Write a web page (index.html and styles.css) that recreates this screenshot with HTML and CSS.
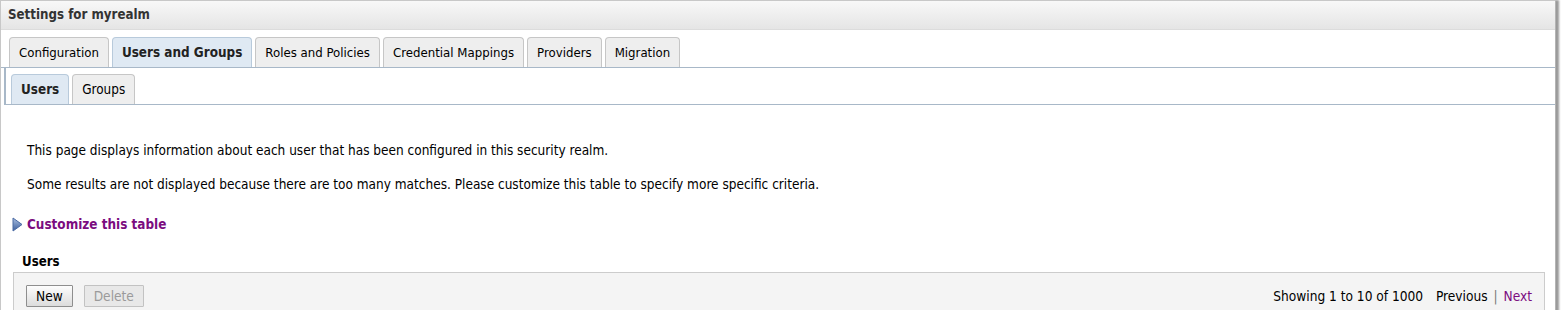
FILE: index.html
```html
<!DOCTYPE html>
<html lang="en">
<head>
  <meta charset="UTF-8" />
  <title>Settings for myrealm</title>
  <link rel="stylesheet" href="styles.css">
</head>
<body>
  <div class="panel">
    <div class="panel-head">Settings for myrealm</div>

    <ul class="tabs">
      <li>Configuration</li>
      <li class="active">Users and Groups</li>
      <li>Roles and Policies</li>
      <li>Credential Mappings</li>
      <li>Providers</li>
      <li>Migration</li>
    </ul>

    <div class="subbar">
      <ul class="tabs subtabs">
        <li class="active">Users</li>
        <li>Groups</li>
      </ul>
    </div>

    <div class="content">
      <p>This page displays information about each user that has been configured in this security realm.</p>
      <p>Some results are not displayed because there are too many matches. Please customize this table to specify more specific criteria.</p>

      <a class="toggle" href="#">
        <svg width="11" height="15" viewBox="0 0 11 15">
          <defs>
            <linearGradient id="tri" x1="0" y1="0" x2="0" y2="1">
              <stop offset="0" stop-color="#a9bee0" />
              <stop offset="1" stop-color="#3d5f9c" />
            </linearGradient>
          </defs>
          <path d="M1 1 L10 7.5 L1 14 Z" fill="url(#tri)" stroke="#4a6aa3" stroke-width="1" stroke-linejoin="round" />
        </svg>
        Customize this table
      </a>

      <div class="table-title">Users</div>
      <div class="toolbar">
        <div class="actions">
          <button>New</button>
          <button disabled>Delete</button>
        </div>
        <div class="pager">
          Showing 1 to 10 of 1000
          <span class="prev">Previous</span>
          <span class="sep">|</span>
          <a href="#">Next</a>
        </div>
      </div>
    </div>
  </div>
</body>
</html>
```

FILE: styles.css
```css
body {
  margin: 0;
  font-family: "DejaVu Sans Condensed", "DejaVu Sans", sans-serif;
  font-size: 13.5px;
  color: #000;
  background: #fff;
}
.panel {
  width: 1554px;
  height: 330px;
  border: 1px solid #c8c8c8;
  border-right: 1px solid #b4b4b4;
  box-shadow: 3px 0 2px #9a9a9a;
  overflow: hidden;
}
.panel-head {
  height: 28px;
  line-height: 28px;
  padding-left: 7px;
  font-weight: bold;
  font-size: 13.2px;
  color: #333;
  background: linear-gradient(#f8f8f8, #e5e5e5);
  border-bottom: 1px solid #dcdcdc;
}
.tabs {
  list-style: none;
  margin: 7px 0 0;
  padding: 0 0 0 8px;
  display: flex;
  gap: 3px;
  border-bottom: 1px solid #a8b8c8;
}
.tabs li {
  height: 29px;
  line-height: 29px;
  padding: 0 9px;
  font-size: 13.1px;
  background: #eeeeee;
  border: 1px solid #c6c6c6;
  border-bottom: none;
  border-radius: 4px 4px 0 0;
  color: #000;
}
.tabs li.active {
  font-weight: bold;
  font-size: 13.4px;
  background: #dfe9f3;
  border-color: #b8cadb;
  color: #222;
}
.subbar {
  margin-left: 3px;
  border-left: 2px solid #a8b8c8;
}
.subtabs {
  margin: 0;
  padding: 6px 0 0 5px;
}
.subtabs li {
  padding: 0 9px;
  font-size: 13.4px;
}
.content {
  padding: 36px 0 0 26px;
}
.content p {
  margin: 0 0 16px;
  line-height: 18px;
}
.toggle {
  display: flex;
  align-items: center;
  gap: 4px;
  margin: 22px 0 0 -15px;
  height: 18px;
  font-weight: bold;
  font-size: 13.4px;
  color: #7b0c7f;
  text-decoration: none;
}
.table-title {
  margin: 20px 0 0 -5px;
  font-weight: bold;
  font-size: 13.2px;
  line-height: 18px;
}
.toolbar {
  margin: 1px 0 0 -14px;
  width: 1506px;
  height: 50px;
  padding: 12px 12px 0;
  background: #f4f4f4;
  border: 1px solid #cccccc;
  display: flex;
  justify-content: space-between;
  align-items: flex-start;
}
.actions {
  display: flex;
  gap: 11px;
}
.actions button {
  font-family: inherit;
  font-size: 13.6px;
  height: 22px;
  padding: 0 9px;
  color: #000;
  background: linear-gradient(#fdfdfd, #dcdcdc);
  border: 1px solid #8e8e8e;
  border-radius: 1px;
}
.actions button:disabled {
  color: #9a9a9a;
  background: #e8e8e8;
  border-color: #c2c2c2;
}
.pager {
  font-size: 13.6px;
  line-height: 22px;
  color: #000;
}
.pager .prev {
  margin-left: 9px;
}
.pager .sep {
  color: #777;
  margin: 0 2px;
}
.pager a {
  color: #7b0c7f;
  text-decoration: none;
}
```
